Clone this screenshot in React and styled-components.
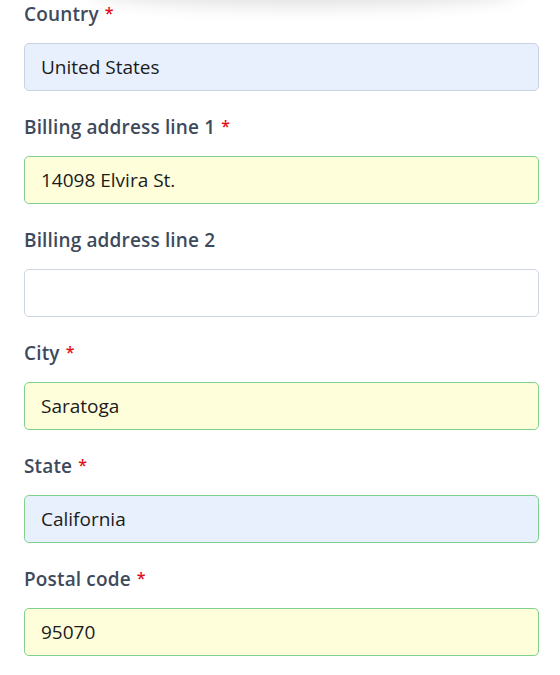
import styled, { createGlobalStyle } from "styled-components";

const GlobalStyle = createGlobalStyle`
  body {
    margin: 0;
    background: #ffffff;
    font-family: "Open Sans", Lato, Arial, sans-serif;
  }
`;

const fields = [
  { label: "Country", required: true, value: "United States", tone: "autofill" },
  { label: "Billing address line 1", required: true, value: "14098 Elvira St.", tone: "valid" },
  { label: "Billing address line 2", required: false, value: "", tone: "empty" },
  { label: "City", required: true, value: "Saratoga", tone: "valid" },
  { label: "State", required: true, value: "California", tone: "autofillValid" },
  { label: "Postal code", required: true, value: "95070", tone: "valid" },
];

const tones = {
  autofill: { bg: "#e8f0fe", border: "#c7d2e3" },
  valid: { bg: "#fefedb", border: "#7fd18e" },
  empty: { bg: "#ffffff", border: "#cdd6e2" },
  autofillValid: { bg: "#e8f0fe", border: "#7fd18e" },
};

const App = () => {
  return (
    <>
      <GlobalStyle />
      <Page>
        <TopShadow />
        {fields.map((f) => (
          <Field key={f.label}>
            <Label>
              {f.label}
              {f.required && <Star>*</Star>}
            </Label>
            <Input readOnly value={f.value} $tone={f.tone} />
          </Field>
        ))}
      </Page>
    </>
  );
};

export default App;

const Page = styled.div`
  position: relative;
  overflow: hidden;
  height: 675px;
  box-sizing: border-box;
  padding: 2px 21px 0 24px;
  display: flex;
  flex-direction: column;
  gap: 24px;
`;

const TopShadow = styled.div`
  position: absolute;
  top: -30px;
  left: 90px;
  right: 40px;
  height: 30px;
  border-radius: 50%;
  box-shadow: 0 6px 18px rgba(0, 0, 0, 0.12);
`;

const Field = styled.div`
  display: flex;
  flex-direction: column;
  gap: 17px;
`;

const Label = styled.label`
  display: block;
  height: 24px;
  font-size: 19px;
  line-height: 24px;
  font-weight: 600;
  letter-spacing: 0.15px;
  color: #3e4a5c;
`;

const Star = styled.span`
  color: #e3101a;
  font-size: 16px;
  line-height: 0;
  margin-left: 6px;
  vertical-align: 2px;
`;

const Input = styled.input`
  box-sizing: border-box;
  width: 515px;
  height: 48px;
  padding: 0 16px;
  border-radius: 5px;
  border: 1px solid ${(p) => tones[p.$tone].border};
  background: ${(p) => tones[p.$tone].bg};
  font-family: "Open Sans", Lato, Arial, sans-serif;
  font-size: 19px;
  color: #1b1b1b;
  outline: none;
`;
